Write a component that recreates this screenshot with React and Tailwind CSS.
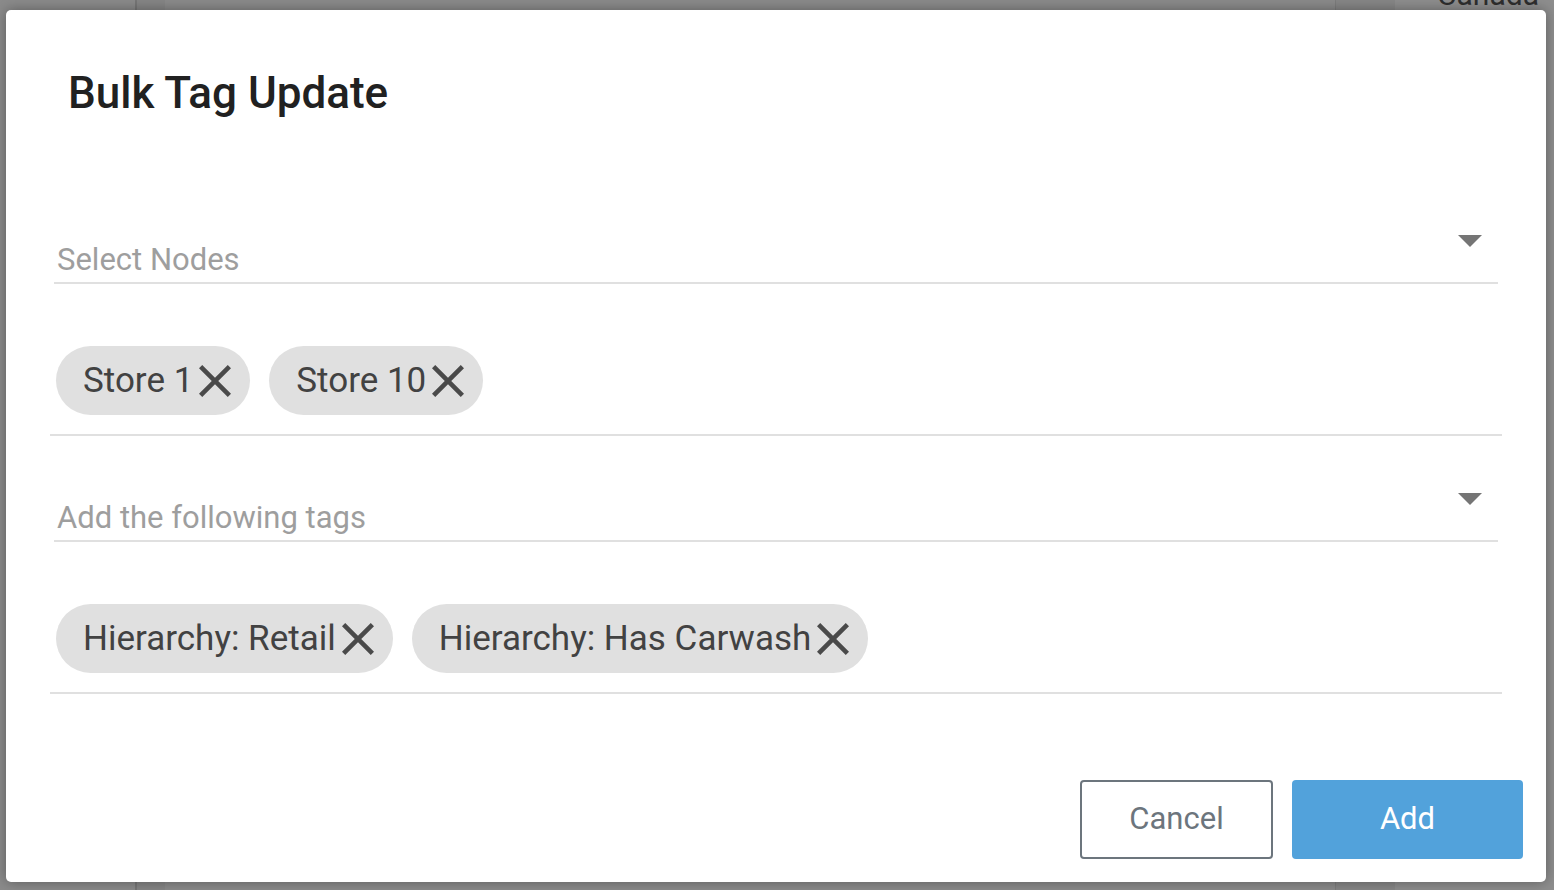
import React from "react";

const nodes = ["Store 1", "Store 10"];
const tags = ["Hierarchy: Retail", "Hierarchy: Has Carwash"];

function Caret() {
  return (
    <svg width="24" height="12" viewBox="0 0 24 12" className="mr-4 shrink-0">
      <path d="M0 0 L24 0 L12 12 Z" fill="#757575" />
    </svg>
  );
}

function CloseIcon() {
  return (
    <svg width="32" height="32" viewBox="5 5 14 14" className="ml-[6px] shrink-0">
      <path
        d="M19 6.41L17.59 5 12 10.59 6.41 5 5 6.41 10.59 12 5 17.59 6.41 19 12 13.41 17.59 19 19 17.59 13.41 12z"
        fill="#4a4a4a"
      />
    </svg>
  );
}

function SelectField({ placeholder }) {
  return (
    <div className="mx-[4px] flex items-start border-b-2 border-[#e0e0e0] pb-[4px]">
      <div className="mt-[7px] h-[36px] flex-1 pl-[3px] text-[31px] leading-[36px] text-[#9e9e9e]">
        {placeholder}
      </div>
      <Caret />
    </div>
  );
}

function Chip({ label }) {
  return (
    <div className="flex h-[69px] items-center rounded-full bg-[#e0e0e0] pl-[27px] pr-[19px] text-[35px] text-[#424242]">
      <span className="mt-[2px]">{label}</span>
      <CloseIcon />
    </div>
  );
}

function ChipRow({ items }) {
  return (
    <div className="flex gap-[19px] border-b-2 border-[#e0e0e0] pb-[19px] pl-[6px] pt-[62px]">
      {items.map((t) => (
        <Chip key={t} label={t} />
      ))}
    </div>
  );
}

export default function App() {
  return (
    <div
      className="relative h-[890px] w-[1554px] overflow-hidden bg-[#8a8a8a]"
      style={{ fontFamily: "Roboto, 'Liberation Sans', sans-serif" }}
    >
      {/* page behind the overlay */}
      <div className="flex h-full">
        <div className="w-[135px] bg-[#8b8b8b]" />
        <div className="w-[30px] border-l-2 border-[#777] bg-[#868686]" />
        <div className="flex-1 bg-[#8b8b8b]" />
        <div className="w-[60px] border-l border-[#7d7d7d] bg-[#878787]" />
        <div className="w-[159px] bg-[#8e8e8e]">
          <div className="-mt-[18px] pl-[42px] text-[30px] leading-[26px] text-[#2e2e2e]">Canada</div>
        </div>
      </div>

      {/* modal */}
      <div className="absolute left-[6px] top-[10px] flex h-[872px] w-[1540px] flex-col rounded-[5px] bg-white shadow-[0_0_14px_rgba(0,0,0,0.35)]">
        <div className="flex-1 px-[44px] pt-[57px]">
          <h2 className="ml-[18px] text-[44px] font-medium leading-[52px] text-[#212121]">Bulk Tag Update</h2>

          <div className="mt-[116px]">
            <SelectField placeholder="Select Nodes" />
          </div>
          <ChipRow items={nodes} />

          <div className="mt-[57px]">
            <SelectField placeholder="Add the following tags" />
          </div>
          <ChipRow items={tags} />
        </div>

        <div className="flex justify-end gap-[19px] px-[23px] pb-[23px]">
          <button className="h-[79px] w-[193px] rounded-[4px] border-2 border-[#6c757d] bg-white text-[31px] text-[#6c757d]">
            Cancel
          </button>
          <button className="h-[79px] w-[231px] rounded-[4px] bg-[#52a2db] text-[31px] text-white">
            Add
          </button>
        </div>
      </div>
    </div>
  );
}
